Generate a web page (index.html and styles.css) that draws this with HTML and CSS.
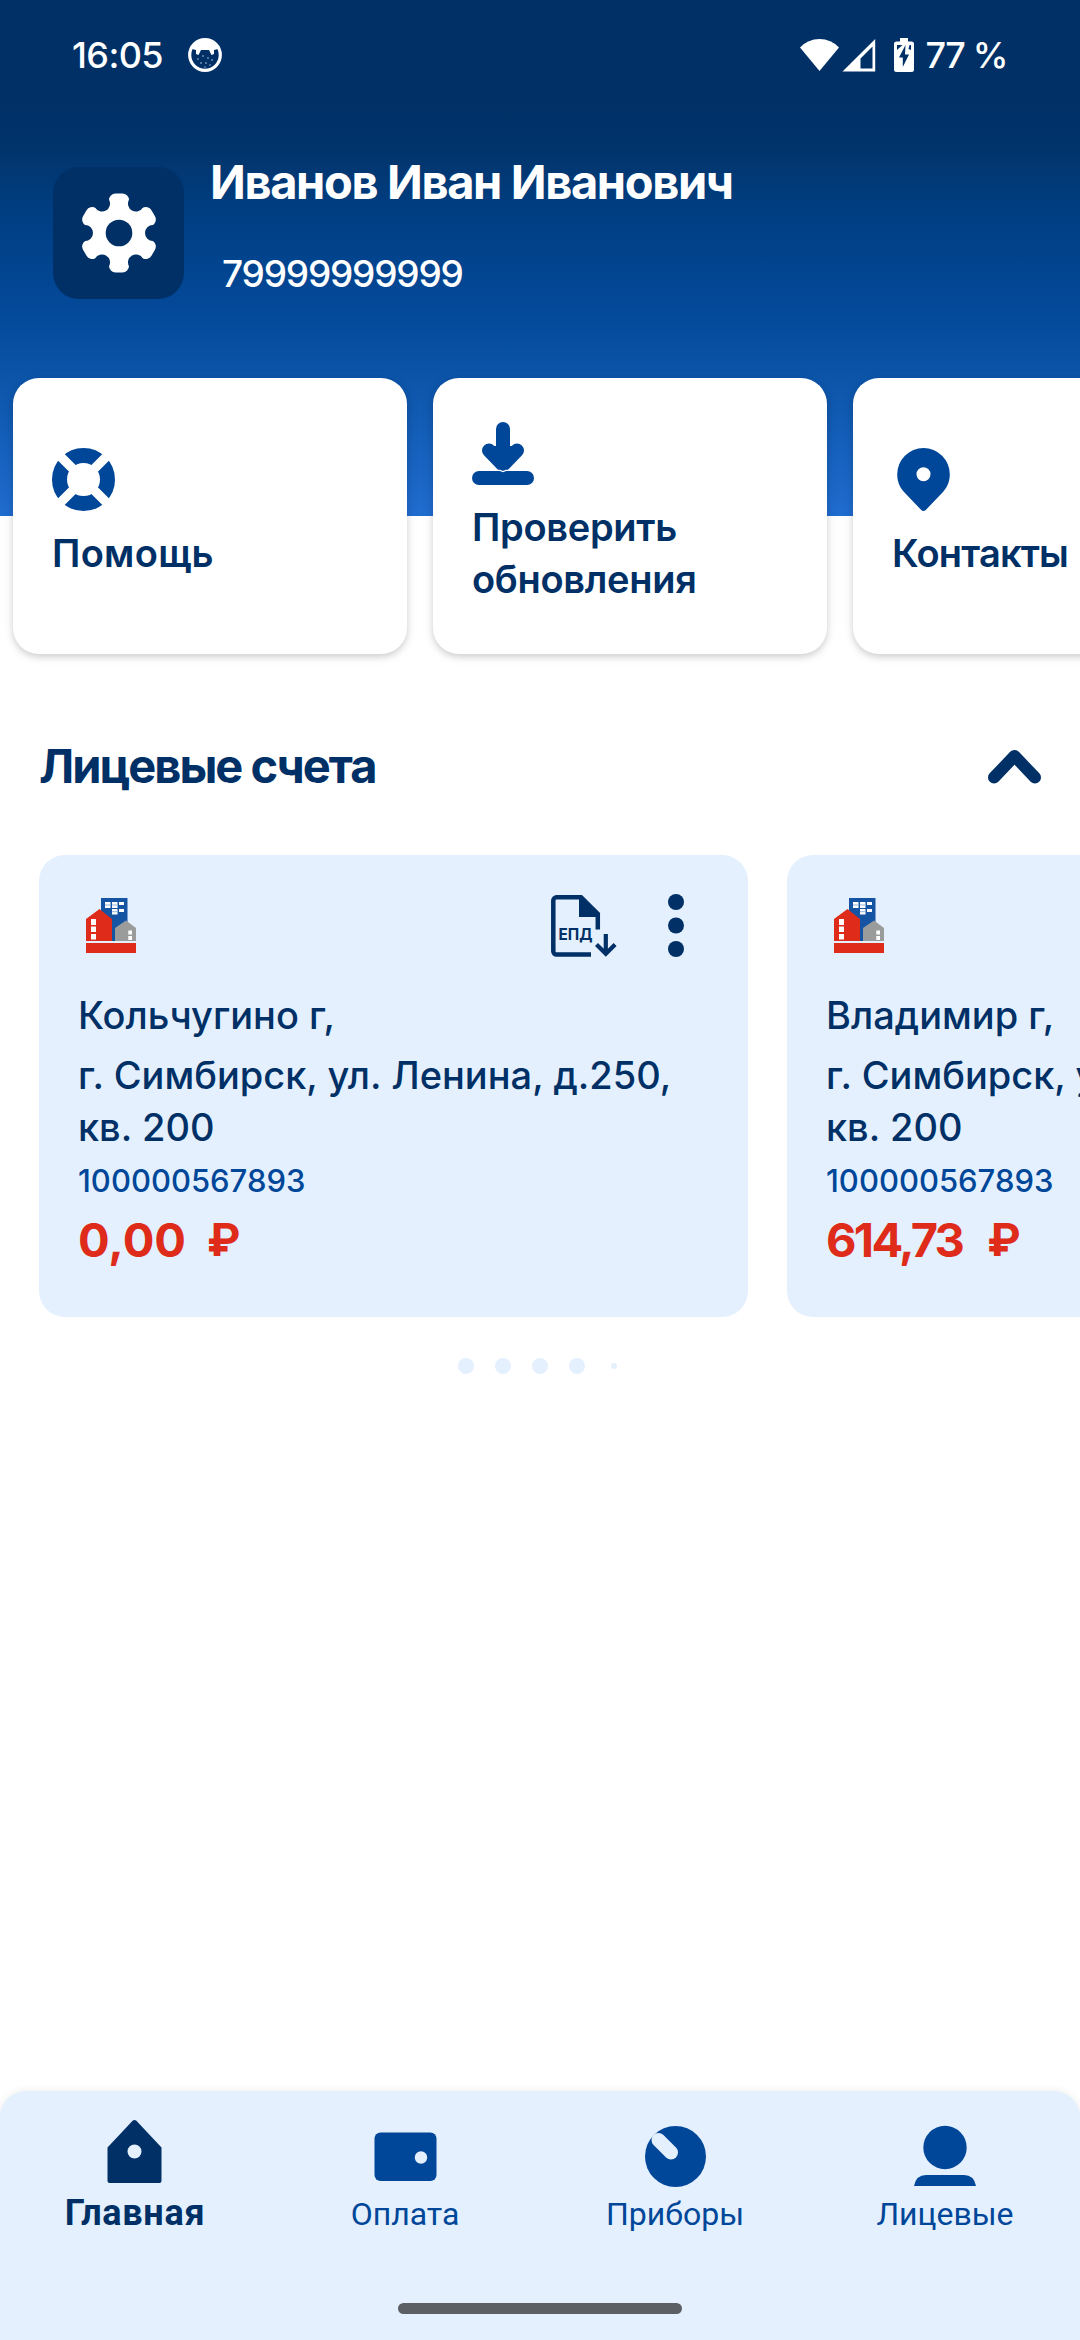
FILE: index.html
```html
<!DOCTYPE html>
<html lang="ru">
<head>
<meta charset="utf-8">
<title>Главная</title>
<link rel="stylesheet" href="styles.css">
</head>
<body>
<svg class="defs" aria-hidden="true">
  <symbol id="logo" viewBox="0 0 50 55">
    <path fill="#1554a3" d="M15 0h26.500v43H15z"/>
    <path fill="#fff" d="M19 4h5.500v6H19zM26 4h5.500v6H26zM33 4h5v3h-5zM26 11h5.500v5.500H26zM33 11h5v3h-5z"/>
    <path stroke="#8fb3da" stroke-width="1" d="M19 7h5.500M26 7h5.500M26 13.700h5.500"/>
    <path fill="#de2b1a" d="M0 21L13.500 11 26 21v22H0zM0 45h50v10H0z"/>
    <path fill="#fff" d="M5 21h5v6H5zM5 28.500h5V34H5zM5 36h5v5.500H5z"/>
    <path fill="#9a9c9b" d="M29 30l11-7.500L50 30v13H29z"/>
    <path fill="#fff" d="M42.300 32.500H46v4h-3.700zM42.300 38H46v4h-3.700z"/>
  </symbol>
</svg>
<div class="app">
  <header class="header">
    <div class="status">
      <div class="status-left">
        <span class="time">16:05</span>
        <svg width="34" height="34" viewBox="0 0 34 34">
          <circle cx="17" cy="17" r="15.300" fill="none" stroke="#fff" stroke-width="3.200"/>
          <path fill="#fff" d="M4 11Q8 2 17 2t13 9l-4 1v4l-2.500 1-2.500-5h-8l-2.500 5L8 16v-4z"/>
          <g fill="#b9cbe2"><circle cx="10" cy="21" r=".8"/><circle cx="15" cy="18" r=".8"/><circle cx="20" cy="20" r=".8"/><circle cx="24" cy="22" r=".8"/><circle cx="13" cy="25" r=".8"/><circle cx="18" cy="25" r=".8"/><circle cx="17" cy="29" r=".7"/><circle cx="22" cy="27" r=".7"/></g>
        </svg>
      </div>
      <div class="status-right">
        <svg width="78" height="34" viewBox="0 0 78 34">
          <path fill="#fff" d="M0 9.500Q8 1 19.500 1T39 9.500L19.500 33z"/>
          <path fill="#fff" fill-rule="evenodd" d="M42.500 33.500L75.200 1v32.500zM60.500 30.500h12V8.500l-12 12z"/>
        </svg>
        <svg class="battery" width="20" height="34" viewBox="0 0 20 34">
          <path fill="#fff" d="M6 0h8v3.500h3.500A2.500 2.500 0 0 1 20 6v25.500a2.500 2.500 0 0 1-2.500 2.500h-15A2.500 2.500 0 0 1 0 31.500V6a2.500 2.500 0 0 1 2.500-2.500H6z"/>
          <path fill="#003066" d="M11.500 7L5 19.500h3.800V29L15 16.500h-4zM3 7h5.500L3 12zM17 7v5l-2.500-1 1-4z"/>
        </svg>
        <span class="percent">77 %</span>
      </div>
    </div>
    <div class="user">
      <button class="settings" aria-label="Настройки">
        <svg width="80" height="80" viewBox="-40 -40 80 80">
          <mask id="gear">
            <g fill="#fff"><circle r="31"/>
            <rect x="-10" y="-39.500" width="20" height="79" rx="6.500"/>
            <rect x="-10" y="-39.500" width="20" height="79" rx="6.500" transform="rotate(60)"/>
            <rect x="-10" y="-39.500" width="20" height="79" rx="6.500" transform="rotate(120)"/></g>
            <circle r="13.300"/>
            <circle cx="34" r="8"/><circle cx="34" r="8" transform="rotate(60)"/><circle cx="34" r="8" transform="rotate(120)"/><circle cx="34" r="8" transform="rotate(180)"/><circle cx="34" r="8" transform="rotate(240)"/><circle cx="34" r="8" transform="rotate(300)"/>
          </mask>
          <rect x="-40" y="-40" width="80" height="80" fill="#fff" mask="url(#gear)"/>
        </svg>
      </button>
      <div class="user-text">
        <div class="name">Иванов Иван Иванович</div>
        <div class="phone">79999999999</div>
      </div>
    </div>
  </header>

  <section class="quick">
    <div class="quick-card">
      <svg width="63" height="63" viewBox="0 0 63 63">
        <circle cx="31.500" cy="31.500" r="24" fill="none" stroke="#004799" stroke-width="15"/>
        <path stroke="#fff" stroke-width="9.500" d="M5 5l53 53M58 5L5 58"/>
      </svg>
      <div class="quick-label help">Помощь</div>
    </div>
    <div class="quick-card">
      <svg width="63" height="63" viewBox="0 0 63 63">
        <g fill="none" stroke="#004799" stroke-width="14" stroke-linecap="round" stroke-linejoin="round"><path d="M31 7v31"/><path d="M17 28.500L31 43l14-14.500" /><path d="M7 56h48"/></g>
        <path fill="#004799" d="M18 24h26L31 46z"/>
        <path stroke="#fff" stroke-width="1.200" d="M0 48.400h28l3 1.100 3-1.100h29" fill="none"/>
      </svg>
      <div class="quick-label">Проверить обновления</div>
    </div>
    <div class="quick-card">
      <svg width="63" height="63" viewBox="0 0 63 63">
        <path fill="#004799" fill-rule="evenodd" d="M31.500 0A26.300 26.300 0 0 1 57.800 26.300C57.800 35 54 41 50.500 44.500L34 61.700q-2.500 2.400-5 0L12.500 44.500C9 41 5.200 35 5.200 26.300A26.300 26.300 0 0 1 31.500 0zm0 19.300a7 7 0 1 0 0 14 7 7 0 0 0 0-14z"/>
      </svg>
      <div class="quick-label contacts">Контакты</div>
    </div>
  </section>

  <div class="section-head">
    <h2 class="section-title">Лицевые счета</h2>
    <svg width="53" height="35" viewBox="0 0 53 35"><path fill="none" stroke="#003066" stroke-width="12" stroke-linecap="round" stroke-linejoin="round" d="M6 28.500L26.500 7 47 28.500"/></svg>
  </div>

  <section class="accounts">
    <article class="account">
      <div class="account-top">
        <svg class="logo" width="50" height="55"><use href="#logo"/></svg>
        <svg class="epd" width="66" height="62" viewBox="0 0 66 62">
          <path fill="none" stroke="#003066" stroke-width="4.500" d="M40 59.500H5.500a3.200 3.200 0 0 1-3.200-3.200V5.500a3.200 3.200 0 0 1 3.200-3.200H30L46.800 19v15.500"/>
          <path fill="#003066" d="M28 1h3.500L49 18.500V22H28z"/>
          <text class="epd-text" x="7.500" y="44.500" textLength="34" lengthAdjust="spacingAndGlyphs">ЕПД</text>
          <path fill="none" stroke="#003066" stroke-width="4.200" d="M54.800 39v19M45.500 49.500l9.300 9.300 9.300-9.300"/>
        </svg>
        <svg class="more" width="16" height="63" viewBox="0 0 16 63"><circle cx="8" cy="8" r="8"/><circle cx="8" cy="31.500" r="8"/><circle cx="8" cy="55" r="8"/></svg>
      </div>
      <div class="city">Кольчугино г,</div>
      <div class="street">г. Симбирск, ул. Ленина, д.250, кв. 200</div>
      <div class="number">100000567893</div>
      <div class="balance"><span>0,00</span><span class="currency">₽</span></div>
    </article>
    <article class="account">
      <div class="account-top">
        <svg class="logo" width="50" height="55"><use href="#logo"/></svg>
      </div>
      <div class="city">Владимир г,</div>
      <div class="street">г. Симбирск, ул. Ленина, д.250, кв. 200</div>
      <div class="number">100000567893</div>
      <div class="balance"><span class="tight">614,73</span><span class="currency">₽</span></div>
    </article>
  </section>

  <div class="pager"><i class="dot"></i><i class="dot"></i><i class="dot"></i><i class="dot"></i><i class="dot small"></i></div>

  <nav class="nav">
    <div class="tabs">
      <div class="tab active">
        <svg width="63" height="63" viewBox="0 0 63 63"><path fill="#003066" fill-rule="evenodd" d="M28.600.8q1.900-1.500 3.800 0L57.500 27.500V61q0 2-2 2h-50q-2 0-2-2V27.500zM30.500 24.500a7 7 0 1 0 0 14 7 7 0 0 0 0-14z"/></svg>
        <span>Главная</span>
      </div>
      <div class="tab">
        <svg width="63" height="63" viewBox="0 0 63 63"><rect x=".5" y="7.500" width="62" height="48.500" rx="6" fill="#004799"/><circle cx="47" cy="32.500" r="6.200" fill="#e4f0fe"/></svg>
        <span>Оплата</span>
      </div>
      <div class="tab">
        <svg width="63" height="63" viewBox="0 0 63 63"><circle cx="31.500" cy="31.500" r="30.500" fill="#004799"/><path stroke="#e4f0fe" stroke-width="14" stroke-linecap="round" d="M14.500 15l12.500 12.500"/></svg>
        <span>Приборы</span>
      </div>
      <div class="tab">
        <svg width="63" height="63" viewBox="0 0 63 63"><circle cx="31" cy="22.500" r="21.700" fill="#004799"/><path fill="#004799" d="M0 61q2-11 12-11h38q10 0 12 11z"/></svg>
        <span>Лицевые</span>
      </div>
    </div>
    <div class="handle"></div>
  </nav>
</div>
</body>
</html>
```
FILE: styles.css
```css
* { box-sizing: border-box; }
html, body { margin: 0; }
body { background: #fff; font-family: Inter, "Noto Sans", sans-serif; color: #003066; }
svg { display: block; flex: none; }
.defs { position: absolute; width: 0; height: 0; }
.app { width: 1080px; height: 2340px; display: flex; flex-direction: column; overflow: hidden; }

.header {
  flex: none;
  height: 516px;
  color: #fff;
  background: linear-gradient(#003066 0, #003066 105px, #02356d 155px, #003d80 205px, #034795 290px, #054c9d 330px, #0c54a8 375px, #206dd0 516px);
}
.status { height: 108px; display: flex; justify-content: space-between; align-items: center; padding: 2px 73px 0 72px; font-size: 36px; font-weight: 500; line-height: 44px; }
.status-left, .status-right { display: flex; align-items: center; }
.status-left { gap: 25px; }
.time { letter-spacing: -0.6px; }
.percent { letter-spacing: -1.4px; }
.battery { margin: 0 11px 0 16px; }

.user { display: flex; align-items: flex-end; gap: 26px; padding: 44px 0 0 53px; }
.settings { width: 131px; height: 132px; padding: 0; border: 0; border-radius: 26px; background: #003066; display: flex; align-items: center; justify-content: center; }
.user-text { display: flex; flex-direction: column; gap: 37px; }
.name { font-size: 47px; font-weight: 700; line-height: 60px; letter-spacing: -1.37px; }
.phone { padding-left: 12px; font-size: 37px; font-weight: 500; line-height: 50px; letter-spacing: -1.2px; }

.quick { flex: none; display: flex; gap: 26px; margin-top: -138px; padding-left: 13px; }
.quick-card {
  flex: none;
  width: 394px;
  height: 276px;
  padding: 0 39px 5px;
  display: flex;
  flex-direction: column;
  justify-content: center;
  gap: 16px;
  background: #fff;
  border-radius: 26px;
  box-shadow: 0 3px 6px rgba(0, 0, 0, .14), 0 2px 14px rgba(0, 0, 0, .07);
}
.quick-label { font-size: 38px; font-weight: 600; line-height: 52px; letter-spacing: -0.3px; }
.help { letter-spacing: 0.3px; }
.contacts { letter-spacing: -0.8px; }

.section-head { display: flex; align-items: center; justify-content: space-between; margin-top: 82px; padding: 0 39px; height: 60px; }
.section-title { margin: 0; font-size: 47px; font-weight: 700; line-height: 60px; letter-spacing: -2px; }

.accounts { flex: none; display: flex; gap: 39px; margin-top: 59px; padding-left: 39px; }
.account { flex: none; width: 709px; height: 462px; padding: 39px; border-radius: 26px; background: #e4f0fe; font-size: 38px; font-weight: 500; line-height: 52px; }
.account-top { display: flex; align-items: center; height: 63px; margin-bottom: 32px; padding: 0 25px 0 8px; }
.epd { margin-left: auto; }
.more { margin-left: 51px; fill: #003066; }
.epd-text { font: 700 16px Inter, sans-serif; fill: #003066; }
.street { margin-top: 8px; }
.number { margin-top: 6px; font-size: 31px; font-weight: 450; line-height: 44px; color: #004799; }
.balance { margin-top: 7px; display: flex; gap: 21px; font-size: 47px; font-weight: 700; line-height: 60px; color: #de2b1a; }
.tight { letter-spacing: -2.7px; margin-right: 4px; }
.currency { font-size: 45px; }

.pager { display: flex; align-items: center; gap: 21px; margin-top: 41px; padding-left: 458px; height: 16px; }
.dot { width: 16px; height: 16px; border-radius: 50%; background: #e4f0fe; }
.small { width: 6px; height: 6px; margin-left: 5px; }

.nav { margin-top: auto; flex: none; height: 249px; display: flex; flex-direction: column; align-items: center; justify-content: space-between; padding-bottom: 26px; background: #e4f0fe; border-radius: 26px 26px 0 0; box-shadow: 0 0 10px rgba(0, 0, 0, .08); }
.tabs { display: grid; grid-template-columns: repeat(4, 270px); }
.tab { display: flex; flex-direction: column; align-items: center; gap: 1px; padding-top: 34px; font: 400 32px/50px Roboto, sans-serif; color: #004799; }
.active { padding-top: 29px; gap: 5px; font-size: 36px; font-weight: 700; letter-spacing: 0.7px; color: #003066; }
.handle { width: 284px; height: 11px; border-radius: 6px; background: #5c6064; }
```
